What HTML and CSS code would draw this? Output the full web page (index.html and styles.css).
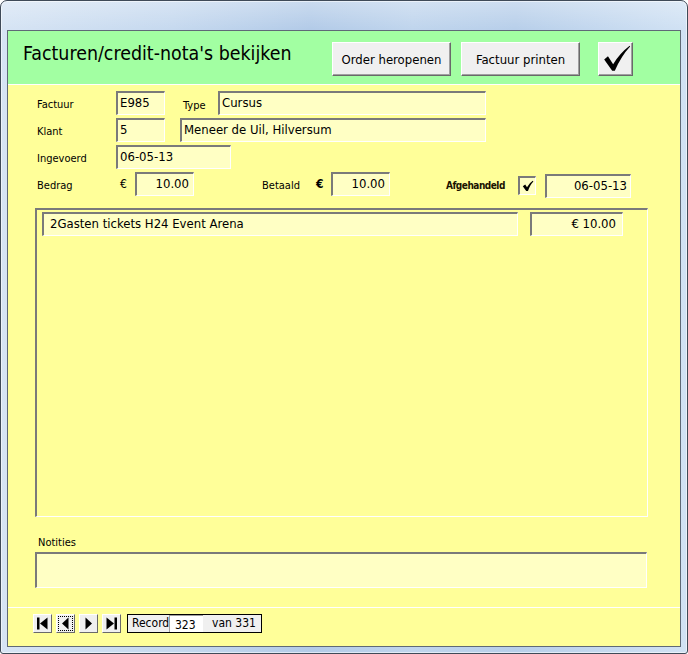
FILE: index.html
```html
<!DOCTYPE html>
<html lang="nl">
<head>
<meta charset="utf-8">
<title>Facturen/credit-nota's bekijken</title>
<link rel="stylesheet" href="styles.css">
</head>
<body>
<div class="window">
  <div class="client">
    <div class="header">
      <h1 class="title">Facturen/credit-nota's bekijken</h1>
      <button class="btn btn-order">Order heropenen</button>
      <button class="btn btn-print">Factuur printen</button>
      <button class="btn btn-ok" aria-label="OK">
        <svg width="35" height="34" viewBox="0 0 35 34"><path d="M5.5 17.5 L9.5 14 L15 22.5 Q22 11 32.5 3 L33 3.8 Q23.5 14 16.8 29.5 L14 29.5 Z" fill="#000"/></svg>
      </button>
    </div>
    <div class="detail">
      <div class="row">
        <span class="label lbl-main">Factuur</span>
        <div class="field f-small">E985</div>
        <span class="label lbl-type">Type</span>
        <div class="field f-type">Cursus</div>
      </div>
      <div class="row">
        <span class="label lbl-main">Klant</span>
        <div class="field f-small">5</div>
        <div class="field f-klant">Meneer de Uil, Hilversum</div>
      </div>
      <div class="row">
        <span class="label lbl-main">Ingevoerd</span>
        <div class="field f-date">06-05-13</div>
      </div>
      <div class="row row-amount">
        <span class="label lbl-bedrag">Bedrag</span>
        <span class="euro">€</span>
        <div class="field f-amount">10.00</div>
        <span class="label lbl-betaald">Betaald</span>
        <span class="euro euro-bold">€</span>
        <div class="field f-amount">10.00</div>
        <span class="label lbl-afg">Afgehandeld</span>
        <div class="checkbox">
          <svg width="12" height="12" viewBox="0 0 12 12"><path d="M0.8 6.2 L3.2 4.6 L5 7.2 Q7.5 2.8 10.8 0.8 L11.4 1.6 Q8.2 4.6 6 11 L4.2 11 Z" fill="#000"/></svg>
        </div>
        <div class="field f-closed">06-05-13</div>
      </div>
      <div class="subform">
        <div class="line">
          <div class="field f-desc">2Gasten tickets H24 Event Arena</div>
          <div class="field f-price">€ 10.00</div>
        </div>
      </div>
      <div class="notes-label">Notities</div>
      <div class="field f-notes"></div>
    </div>
    <div class="footer">
      <div class="nav">
        <button class="navbtn" aria-label="Eerste record">
          <svg width="13" height="13" viewBox="0 0 13 13"><rect x="1" y="0.5" width="2.5" height="12" fill="#000"/><path d="M11.5 0.5 L11.5 12.5 L4 6.5 Z" fill="#000"/></svg>
        </button>
        <button class="navbtn navbtn-focus" aria-label="Vorige record">
          <svg width="13" height="13" viewBox="0 0 13 13"><path d="M9.5 0.5 L9.5 12.5 L3 6.5 Z" fill="#000"/></svg>
        </button>
        <button class="navbtn" aria-label="Volgende record">
          <svg width="13" height="13" viewBox="0 0 13 13"><path d="M3.5 0.5 L3.5 12.5 L10 6.5 Z" fill="#000"/></svg>
        </button>
        <button class="navbtn" aria-label="Laatste record">
          <svg width="13" height="13" viewBox="0 0 13 13"><path d="M1.5 0.5 L1.5 12.5 L9 6.5 Z" fill="#000"/><rect x="9.5" y="0.5" width="2.5" height="12" fill="#000"/></svg>
        </button>
        <div class="recordbox">
          <span class="rec-label">Record</span>
          <span class="rec-num">323</span>
          <span class="rec-total">van 331</span>
        </div>
      </div>
    </div>
  </div>
</div>
</body>
</html>
```

FILE: styles.css
```css
* { box-sizing: border-box; }

html, body {
  margin: 0;
  padding: 0;
  background: #ffffff;
}

body {
  width: 688px;
  height: 654px;
  overflow: hidden;
  font-family: "DejaVu Sans Condensed", "DejaVu Sans", sans-serif;
  color: #000;
}

.window {
  width: 688px;
  height: 654px;
  border: 1px solid #3f4a58;
  border-radius: 7px 7px 3px 3px;
  padding: 29px 6px 6px 6px;
  background:
    linear-gradient(180deg, rgba(255,255,255,0.3) 0px, rgba(255,255,255,0) 28px),
    linear-gradient(90deg, #d6e4f4 0%, #c6d9ef 25%, #b3cbe8 45%, #c0d5ed 60%, #b8cfea 75%, #d1e2f4 100%);
  box-shadow: inset 0 0 0 1px rgba(255,255,255,0.55);
}

.client {
  width: 674px;
  height: 617px;
  border: 1px solid #5f6976;
  background: #ffff99;
  display: flex;
  flex-direction: column;
}

/* Header */
.header {
  height: 54px;
  flex: none;
  background: #a2ffa2;
  border-bottom: 1px solid #ffffff;
  display: flex;
  align-items: flex-start;
  padding-left: 15px;
}

.title {
  width: 309px;
  margin: 0;
  padding-top: 12px;
  font-size: 19.4px;
  line-height: 22px;
  font-weight: normal;
  white-space: nowrap;
}

.btn {
  margin: 11px 0 0 0;
  height: 34px;
  padding: 0;
  background: #f0f0f0;
  border: 1px solid;
  border-color: #ffffff #696969 #696969 #ffffff;
  box-shadow: inset -1px -1px 0 #a0a0a0;
  font-family: "DejaVu Sans Condensed", "DejaVu Sans", sans-serif;
  font-size: 13px;
  color: #000;
  display: flex;
  align-items: center;
  justify-content: center;
}

.btn-order { width: 119px; }
.btn-print { width: 119px; margin-left: 10px; }
.btn-ok { width: 35px; margin-left: 18px; }
.btn-ok svg { display: block; }

/* Detail */
.detail {
  height: 522px;
  flex: none;
  padding: 6px 0 0 29px;
  display: flex;
  flex-direction: column;
}

.row {
  display: flex;
  align-items: center;
  height: 24px;
  margin-bottom: 3px;
}

.label {
  font-size: 11px;
  line-height: 13px;
  white-space: nowrap;
  flex: none;
  min-width: 0;
}

.lbl-main { width: 79px; padding-top: 2px; }
.lbl-type { width: 35px; margin-left: 18px; padding-top: 4px; }
.lbl-bedrag { width: 83px; }
.lbl-betaald { width: 54px; margin-left: 68px; }
.lbl-afg {
  width: 72px;
  margin-left: 56px;
  font-weight: bold;
  font-size: 10px;
  letter-spacing: -0.5px;
  color: #1a1200;
  overflow: visible;
}

.euro {
  width: 15px;
  flex: none;
  font-size: 12px;
  line-height: 14px;
  margin-top: 5px;
}
.euro-bold { font-weight: bold; }

.field {
  height: 24px;
  flex: none;
  background: #ffffc4;
  border-style: solid;
  border-width: 2px 1px 1px 2px;
  border-color: #7a7a7a #ffffff #ffffff #7a7a7a;
  font-size: 13px;
  line-height: 20px;
  padding: 0 2px 0 2px;
  white-space: nowrap;
  overflow: hidden;
}

.f-small { width: 49px; }
.f-type { width: 268px; }
.f-klant { width: 306px; margin-left: 15px; }
.f-date { width: 115px; }
.f-amount { width: 59px; text-align: right; padding-right: 4px; }
.f-closed { width: 86px; margin-left: 9px; text-align: right; padding-right: 3px; margin-top: 2px; }

.row-amount { align-items: flex-start; }
.row-amount .label { margin-top: 7px; }

.checkbox {
  width: 18px;
  height: 19px;
  flex: none;
  margin-top: 4px;
  background: #ffffc4;
  border-style: solid;
  border-width: 2px 1px 1px 2px;
  border-color: #7a7a7a #ffffff #ffffff #7a7a7a;
  display: flex;
  align-items: center;
  justify-content: center;
}
.checkbox svg { display: block; }

.subform {
  width: 613px;
  height: 309px;
  margin: 9px 0 0 -2px;
  border-style: solid;
  border-width: 2px 1px 1px 2px;
  border-color: #7a7a7a #ffffff #ffffff #7a7a7a;
  padding: 2px 0 0 5px;
}

.line {
  display: flex;
  gap: 12px;
}

.f-desc { width: 476px; padding-left: 6px; }
.f-price { width: 93px; text-align: right; padding-right: 6px; }

.notes-label {
  margin-top: 19px;
  margin-left: 1px;
  font-size: 11px;
  line-height: 13px;
  height: 13px;
}

.f-notes {
  width: 612px;
  height: 36px;
  margin: 3px 0 0 -2px;
}

/* Footer */
.footer {
  flex: none;
  height: 39px;
  border-top: 1px solid #ffffff;
  padding: 6px 0 0 25px;
}

.nav {
  display: flex;
  align-items: center;
  gap: 4px;
}

.navbtn {
  width: 19px;
  height: 19px;
  padding: 0;
  margin: 0;
  background: #f0f0f0;
  border: 1px solid;
  border-color: #ffffff #696969 #696969 #ffffff;
  display: flex;
  align-items: center;
  justify-content: center;
}
.navbtn svg { display: block; }

.navbtn-focus {
  outline: 1px dotted #000;
  outline-offset: -3px;
}

.recordbox {
  margin-left: 2px;
  width: 135px;
  height: 19px;
  border: 1px solid #000;
  background: #f0f0f0;
  display: flex;
  align-items: stretch;
  font-size: 12px;
  line-height: 17px;
}

.rec-label { padding-left: 4px; width: 41px; }

.rec-num {
  width: 34px;
  background: #ffffff;
  border-left: 1px solid #a0a0a0;
  border-top: 1px solid #a0a0a0;
  padding-left: 5px;
  line-height: 19px;
}

.rec-total { padding-left: 9px; }
```
